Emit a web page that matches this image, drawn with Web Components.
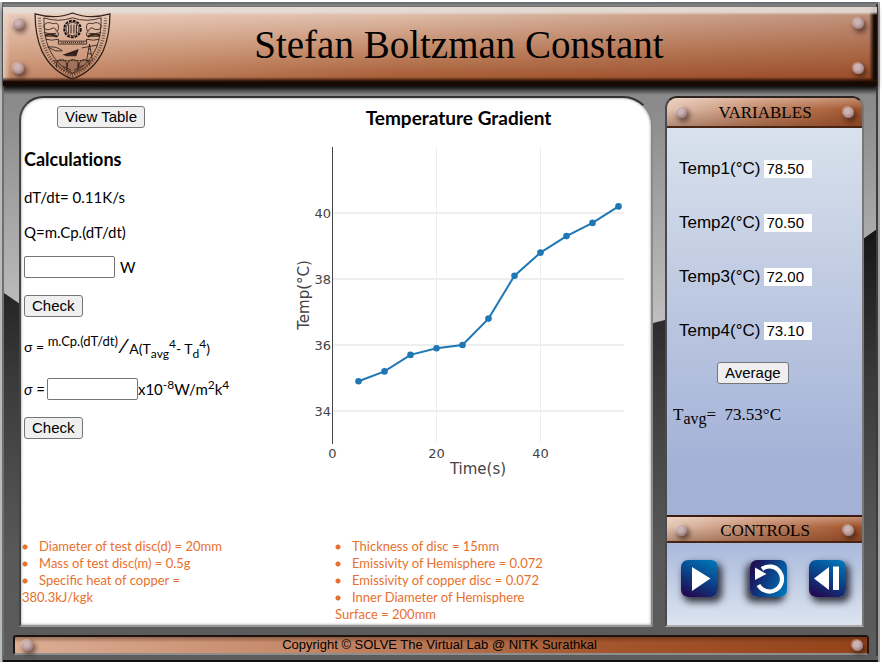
<!DOCTYPE html>
<html lang="en">
<head>
<meta charset="utf-8">
<title>Stefan Boltzman Constant</title>
<style>
  html, body { height: 100%; }
  body { margin: 0; background: #fff; color: #000; font-family: "Liberation Serif", serif; }
</style>
</head>
<body>
<lab-frame>
  <lab-header slot="header">Stefan Boltzman Constant</lab-header>
  <lab-screen slot="screen">
    <lab-calculations slot="calc"></lab-calculations>
    <lab-chart slot="chart"></lab-chart>
    <lab-facts slot="facts">
      <li>Diameter of test disc(d) = 20mm</li>
      <li>Mass of test disc(m) = 0.5g</li>
      <li>Specific heat of copper = 380.3kJ/kgk</li>
    </lab-facts>
    <lab-facts slot="facts2">
      <li>Thickness of disc = 15mm</li>
      <li>Emissivity of Hemisphere = 0.072</li>
      <li>Emissivity of copper disc = 0.072</li>
      <li>Inner Diameter of Hemisphere Surface = 200mm</li>
    </lab-facts>
  </lab-screen>
  <lab-sidebar slot="side"></lab-sidebar>
  <lab-footer slot="footer">Copyright © SOLVE The Virtual Lab @ NITK Surathkal</lab-footer>
</lab-frame>

<script>
const define = (name, html, setup) => {
  const t = document.createElement('template');
  t.innerHTML = html;
  customElements.define(name, class extends HTMLElement {
    constructor() {
      super();
      this.attachShadow({ mode: 'open' }).append(t.content.cloneNode(true));
    }
    connectedCallback() { if (setup) setup(this, this.shadowRoot); }
  });
};

/* Round metal rivet */
define('lab-rivet', `
<style>
  :host { display: block; width: 11px; height: 11px; border-radius: 50%;
    background: radial-gradient(circle at 40% 35%, #cdb4b4 0 25%, #b59a9c 50%, #8a6c6c 85%);
    box-shadow: -1px -1px 1px rgba(255,235,230,.4), 2px 3px 5px 1px rgba(45,22,15,.6); }
</style>`);

/* Metal frame behind everything, with the dark swoosh in the rails */
define('lab-frame', `
<style>
  :host { display: grid; position: relative; box-sizing: border-box; min-height: 100%;
    padding: 7px 14px 9px 3px; grid-template-rows: auto 1fr auto; }
  .bg { position: absolute; inset: 0; width: 100%; height: 100%; z-index: -1; }
  .main { display: grid; grid-template-columns: minmax(0, 1fr) 199px; gap: 12px; padding: 10px 4px 8px 16px; }
  .foot { padding: 0 0 0 10px; }
</style>
<svg class="bg" viewBox="0 0 882 664" preserveAspectRatio="none" aria-hidden="true">
  <defs>
    <linearGradient id="light" x1="0" y1="0" x2="0" y2="1"><stop offset="0" stop-color="#858585"/><stop offset=".3" stop-color="#8a8a8a"/><stop offset="1" stop-color="#c2c2c2"/></linearGradient>
    <linearGradient id="dark" x1="0" y1="0" x2="0" y2="1"><stop offset="0" stop-color="#161616"/><stop offset=".35" stop-color="#3a3a3a"/><stop offset=".75" stop-color="#585858"/><stop offset="1" stop-color="#5c5c5c"/></linearGradient>
    <linearGradient id="shade" x1="0" y1="0" x2="0" y2="1"><stop offset="0" stop-color="#222"/><stop offset="1" stop-color="#222" stop-opacity="0"/></linearGradient>
  </defs>
  <rect x="0" y="2" width="880" height="660" fill="#b9bbbb"/>
  <rect x="2" y="2" width="878" height="660" fill="#6d7070"/>
  <rect x="4" y="4" width="873" height="330" fill="url(#light)"/>
  <path d="M4 293L20 304L640 326L653 323L665 320L863 239L877 229V656H4Z" fill="url(#dark)"/>
  <rect x="4" y="86" width="873" height="9" fill="url(#shade)"/>
  <rect x="876" y="4" width="2" height="656" fill="#3c3c3c"/>
  <rect x="878" y="2" width="2" height="660" fill="#a9a2a6"/>
  <rect x="3" y="656" width="875" height="4" fill="#5d5d5d"/>
  <rect x="3" y="660" width="875" height="2" fill="#151010"/>
</svg>
<slot name="header"></slot>
<div class="main"><slot name="screen"></slot><slot name="side"></slot></div>
<div class="foot"><slot name="footer"></slot></div>`);

define('lab-header', `
<style>
  :host { display: grid; grid-template-columns: 22px 87px minmax(0,1fr) 20px; align-items: center; height: 79px;
    margin-right: -9px; padding: 0 4px 0 5px; box-sizing: border-box;
    background:
      linear-gradient(to bottom, rgba(228,222,216,.9) 0 5px, rgba(228,222,216,0) 8px),
      linear-gradient(to top, #150a04 0 4px, rgba(40,16,6,.95) 5px, rgba(60,25,10,0) 9px),
      linear-gradient(to left, #150a04 0 3px, rgba(40,16,6,0) 8px),
      linear-gradient(to right, rgba(235,215,205,.8), rgba(235,215,205,0) 7px),
      linear-gradient(to right, rgba(255,230,215,.33), rgba(120,50,20,0) 45%, rgba(120,40,10,.3)),
      linear-gradient(to bottom, #e0bfac 8%, #c48c6c 50%, #a65a32 92%);
    box-shadow: 0 2px 5px rgba(0,0,0,.7); }
  .rivets { display: grid; gap: 34px; padding: 3px 0 4px 5px; }
  h1 { margin: 0; font: 400 39px/44px "Liberation Serif", serif; text-align: center; padding: 0 52px 3px 0; }
  svg { display: block; width: 77px; height: 69px; margin: 0 0 1px 4px; overflow: visible; }
  .r { padding-left: 0; }
</style>
<div class="rivets"><lab-rivet></lab-rivet><lab-rivet></lab-rivet></div>
<svg viewBox="0 0 79 71" role="img" aria-label="NITK crest" fill="none" stroke="#33231c" stroke-width=".9">
  <path d="M1 2Q22 8 39.500 1Q57 8 78 2Q78 24 71 40Q61 61 39.500 69Q18 61 8 40Q1 24 1 2Z" stroke-width="1.300"/>
  <path d="M10 6Q25 11 39.500 6Q54 11 69 6Q69 25 64 37Q56 55 39.500 63Q23 55 15 37Q10 25 10 6Z"/>
  <path d="M5.500 6Q6 25 12 39Q20 57 39.500 66Q59 57 67 39Q73 25 73.500 6" stroke-width="3.200" stroke-dasharray="1 1.600" opacity=".65"/>
  <circle cx="39.500" cy="17.500" r="8.500" stroke="#15100d" stroke-width="2" stroke-dasharray="3 1"/>
  <circle cx="39.500" cy="17.500" r="6.800"/>
  <path d="M35.500 13V22M38 13V22M41 13V22M43.500 13V22" stroke="#15100d"/>
  <path d="M10 14Q13 9 19 12Q26 10 25 17L24 20Q27 25 22 26M10 14Q10 19 16 18Q22 14 23 20M10 21Q15 23 23 22M11 25H22M12 28Q18 30 25 28"/>
  <path d="M69 14Q66 9 60 12Q53 10 54 17L55 20Q52 25 57 26M69 14Q69 19 63 18Q57 14 56 20M69 21Q64 23 56 22M68 25H57M67 28Q61 30 54 28"/>
  <path d="M11 24Q17 22 24 25M68 24Q62 22 55 25" stroke-width="2"/>
  <path d="M25 28V33H54V28M25 30H54"/>
  <path d="M28 31.500H51" stroke-width="1.500" stroke-dasharray="1 1"/>
  <path d="M14 36Q24 35 29 40L22 40ZM49 37L65 34M57 33L54 50M57 33L60 50M56 38H58M55 43H59"/>
  <path d="M31 44L45 39L43 45H34ZM33 45H42" fill="#33231c" stroke-width="1.200"/>
  <path d="M23 57Q22 49 28 49Q34 49 34 57Q34 49 40 49Q46 49 46 57Q46 49 52 49Q57 49 57 55"/>
  <path d="M20 50H59L52 58L39.500 64L28 59Z" fill="#4a2e20" fill-opacity=".3" stroke-dasharray="2 1"/>
  <path d="M34 53V60M45 53V60M30 56L38 60M41 60L50 55"/>
</svg>
<h1><slot></slot></h1>
<div class="rivets r"><lab-rivet></lab-rivet><lab-rivet></lab-rivet></div>`);

define('lab-screen', `
<style>
  :host { display: grid; box-sizing: border-box; min-height: 0; padding: 0 0 2px 3px; background: #fff;
    grid-template-columns: 268px minmax(0,1fr); grid-template-rows: 1fr auto;
    border: 2px solid; border-color: #333 #8a8a8a #999 #444; border-radius: 24px 30px 2px 2px;
    box-shadow: inset 0 0 3px #888; }
  .facts { grid-column: 1 / -1; display: grid; grid-template-columns: 313px minmax(0,1fr); margin-left: -2px; min-height: 85px; align-items: start; }
</style>
<slot name="calc"></slot>
<slot name="chart"></slot>
<div class="facts"><slot name="facts"></slot><slot name="facts2"></slot></div>`);

const buttonCss = `
  button { font: 15px/18px "Liberation Sans", sans-serif; color: #000; background: #efefef;
    border: 1px solid #767676; border-radius: 3px; padding: 1px 7px; height: 22px; }`;

define('lab-calculations', `
<style>
  :host { display: flex; flex-direction: column; align-items: flex-start; font: 15px/20px "Comic Sans MS", Lato, sans-serif; font-variant-ligatures: none; padding-top: 8px; }
  ${buttonCss}
  .view { margin-left: 33px; }
  h2 { font-size: 18px; line-height: 24px; margin: 19px 0 16px; }
  p { margin: 0 0 15px; }
  p + .field { margin-top: -1px; }
  input { box-sizing: border-box; width: 91px; height: 22px; border: 1px solid #767676; border-radius: 2px; padding: 1px 2px; background: #fff; font: inherit; }
  .field { display: flex; align-items: center; gap: 5px; height: 22px; margin-bottom: 17px; }
  .tight { gap: 0; }
  .tight label { margin-right: 2px; }
  .formula { display: flex; align-items: center; height: 30px; margin: 15px 0 16px; white-space: pre; font-size: 14px; }
  .num { padding-bottom: 13px; font-size: 13px; } .den { padding-top: 3px; }
  .slash { font: 20px/20px "DejaVu Sans", sans-serif; padding: 0 4px 3px; }
  sub, sup { font-size: 12px; line-height: 0; }
</style>
<button class="view" type="button">View Table</button>
<h2>Calculations</h2>
<p>dT/dt= 0.11K/s</p>
<p>Q=m.Cp.(dT/dt)</p>
<div class="field"><input id="q" type="text" aria-label="Q"><label for="q">W</label></div>
<button type="button">Check</button>
<div class="formula"><span>σ = </span><span class="num">m.Cp.(dT/dt)</span><span class="slash">⁄</span><span class="den">A(T<sub>avg</sub><sup>4</sup>- T<sub>d</sub><sup>4</sup>)</span></div>
<div class="field tight"><label for="s"><i>σ</i> =</label><input id="s" type="text"><span>x10<sup>-8</sup>W/m<sup>2</sup>k<sup>4</sup></span></div>
<button type="button">Check</button>`);

define('lab-chart', `
<style>
  :host { display: block; padding-top: 8px; }
  figure { margin: 0; }
  figcaption { font: 700 19px/24px "Comic Sans MS", Lato, sans-serif; font-variant-ligatures: none; text-align: center; padding-right: 26px; }
  svg { display: block; width: 350px; max-width: 100%; overflow: visible; }
  text { font-family: Verdana, "DejaVu Sans", sans-serif; font-size: 13px; fill: #444; }
  .title { font-size: 15px; }
</style>
<figure>
  <figcaption>Temperature Gradient</figcaption>
  <svg viewBox="292 130 350 360" role="img" aria-label="Temperature against time"></svg>
</figure>`, (host, root) => {
  const svg = root.querySelector('svg');
  const px = t => 332.5 + t * 5.2, py = v => 213 + (40 - v) * 33;
  const temps = [34.9, 35.2, 35.7, 35.9, 36, 36.8, 38.1, 38.8, 39.3, 39.7, 40.2];
  const pts = temps.map((v, i) => [px(5 * (i + 1)), py(v)]);
  let s = '<g stroke="#eee" stroke-width="2">';
  for (const v of [34, 36, 38, 40]) s += `<path d="M333 ${py(v)}H624"/>`;
  for (const t of [20, 40]) s += `<path d="M${px(t)} 147V443" stroke-width="1"/>`;
  s += '</g><path d="M332.500 147V444" stroke="#444"/>';
  s += `<polyline points="${pts.join(' ')}" fill="none" stroke="#1f77b4" stroke-width="2"/>`;
  for (const [x, y] of pts) s += `<circle cx="${x}" cy="${y}" r="3.300" fill="#1f77b4"/>`;
  for (const v of [34, 36, 38, 40]) s += `<text x="331" y="${py(v) + 5}" text-anchor="end">${v}</text>`;
  for (const t of [0, 20, 40]) s += `<text x="${px(t)}" y="458" text-anchor="middle">${t}</text>`;
  s += '<text class="title" x="478" y="474" text-anchor="middle">Time(s)</text>';
  s += '<text class="title" transform="translate(309 295) rotate(-90)" text-anchor="middle">Temp(°C)</text>';
  svg.innerHTML = s;
});

define('lab-facts', `
<style>
  :host { display: block; font: 13px/17px "Comic Sans MS", Lato, sans-serif; color: #e8702e; }
  ul { margin: 0; padding: 0; list-style: none; max-width: 214px; }
  ::slotted(li) { display: block; background: radial-gradient(circle at 3px 9px, currentColor 2px, transparent 3px); text-indent: 17px; }
</style>
<ul><slot></slot></ul>`);

define('lab-bar', `
<style>
  :host { display: grid; grid-template-columns: 11px 1fr 11px; align-items: center; padding: 0 8px 0 9px;
    border-bottom: 2px solid #4a2413; box-sizing: border-box;
    background: linear-gradient(to bottom, rgba(255,240,230,.35), transparent 40%, rgba(90,35,10,.35)), linear-gradient(to right, #e2c4b2, #c08463 50%, #a3552d); }
  h2 { margin: 0; font: 400 17px/24px "Liberation Serif", serif; text-align: center; padding-top: 2px; }
</style>
<lab-rivet></lab-rivet><h2><slot></slot></h2><lab-rivet></lab-rivet>`);

define('lab-temp', `
<style>
  :host { display: flex; align-items: center; gap: 4px; height: 18px; font: 17px/18px "Liberation Sans", sans-serif; }
  input { width: 48px; height: 18px; box-sizing: border-box; border: 0; padding: 0 2px; background: #fff; font: 15px/18px "Liberation Sans", sans-serif; color: #000; }
</style>
<label for="t"></label><input id="t" type="text">`, (host, root) => {
  root.querySelector('label').textContent = host.getAttribute('label');
  root.querySelector('input').value = host.getAttribute('value');
});

define('lab-control', `
<style>
  :host { display: block; width: 37px; height: 37px; }
  button { display: block; width: 100%; height: 100%; padding: 0; border: 0; border-radius: 7px;
    background: linear-gradient(205deg, #0073b6 8%, #0c3f86 50%, #200f55 88%); box-shadow: 3px 4px 7px 1px rgba(15,15,25,.8); }
  :host([kind=reset]) button { background: linear-gradient(115deg, #200f55 12%, #0c3f86 50%, #0073b6 92%); box-shadow: -3px 4px 7px 1px rgba(15,15,25,.8); }
  svg { display: block; width: 37px; height: 37px; }
</style>
<button type="button"><svg viewBox="0 0 37 37" aria-hidden="true"></svg></button>`, (host, root) => {
  const kind = host.getAttribute('kind');
  root.querySelector('button').setAttribute('aria-label', kind);
  root.querySelector('svg').innerHTML = {
    play: '<path d="M11 7L29.500 18.500L11 31Z" fill="#fff"/>',
    reset: '<path d="M12 9A12.500 12.500 0 1 1 8.500 25" fill="none" stroke="#fff" stroke-width="4.200"/><path d="M5 7.500V20L16.500 14Z" fill="#fff"/>',
    step: '<path d="M20 7V30L5 18.500ZM24 6.500H30V30H24Z" fill="#fff"/>'
  }[kind];
});

define('lab-sidebar', `
<style>
  :host { display: flex; flex-direction: column; box-sizing: border-box; border: 2px solid; border-color: #2c2420 #777 #aaa #4a4a50;
    border-radius: 12px 12px 0 0; overflow: hidden; }
  .vars { height: 30px; flex: none; }
  .ctrl { height: 28px; flex: none; border-top: 2px solid #3a1b10; }
  .panel { flex: 1; padding: 32px 12px 0; background: linear-gradient(#d8e1ec, #a3b1d7 88%); }
  .temps { display: grid; gap: 36px; }
  ${buttonCss}
  .avg { display: block; margin: 22px 0 20px 38px; }
  output { display: block; font: 17px/22px "Liberation Serif", serif; margin-left: -6px; white-space: pre; }
  sub { font-size: 16px; line-height: 0; }
  .buttons { display: grid; grid-template-columns: 69px 59px 37px; padding: 17px 13px 28px 14px; background: linear-gradient(#aab9dc, #dce4ef); }
</style>
<lab-bar class="vars">VARIABLES</lab-bar>
<div class="panel">
  <div class="temps">
    <lab-temp label="Temp1(°C)" value="78.50"></lab-temp>
    <lab-temp label="Temp2(°C)" value="70.50"></lab-temp>
    <lab-temp label="Temp3(°C)" value="72.00"></lab-temp>
    <lab-temp label="Temp4(°C)" value="73.10"></lab-temp>
  </div>
  <button class="avg" type="button">Average</button>
  <output>T<sub>avg</sub>=  73.53°C</output>
</div>
<lab-bar class="ctrl">CONTROLS</lab-bar>
<div class="buttons"><lab-control kind="play"></lab-control><lab-control kind="reset"></lab-control><lab-control kind="step"></lab-control></div>`);

define('lab-footer', `
<style>
  :host { display: grid; grid-template-columns: 11px 1fr 11px; align-items: center; height: 20px; box-sizing: border-box; padding: 0 4px 0 7px; margin-right: -1px;
    border: 2px solid; border-color: #1c1310 #2a1a12 #8e8e8e #1c1310; border-radius: 3px;
    background: linear-gradient(to bottom, rgba(60,25,10,.4), transparent 35%), linear-gradient(to right, #dcae95, #bd7a58 45%, #a3552c 70%, #94431a); }
  p { margin: 0; text-align: center; font: 13px/16px "Liberation Sans", sans-serif; padding-right: 6px; }
</style>
<lab-rivet></lab-rivet><p><slot></slot></p><lab-rivet></lab-rivet>`);
</script>
</body>
</html>
